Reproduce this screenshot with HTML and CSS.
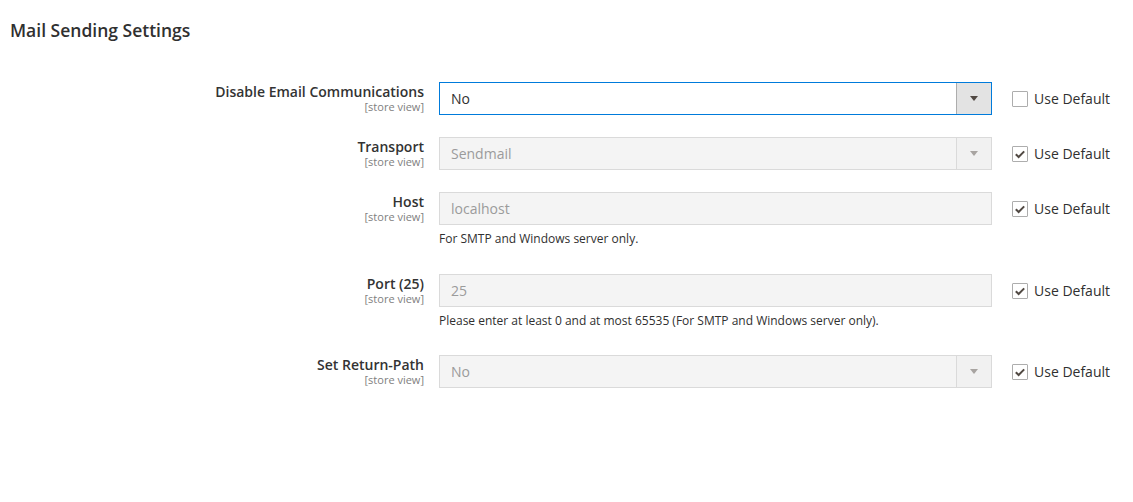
FILE: index.html
```html
<!DOCTYPE html>
<html>
<head>
<meta charset="utf-8">
<link rel="stylesheet" href="styles.css">
</head>
<body>
<div class="section">
  <h2 class="section-title">Mail Sending Settings</h2>
  <div class="form">
    <div class="row">
      <div class="label"><span class="label-text">Disable Email Communications</span><span class="scope">[store view]</span></div>
      <div class="control">
        <div class="select focus"><span class="value">No</span><span class="btn"><span class="arrow"></span></span></div>
      </div>
      <div class="default"><span class="check"></span><span>Use Default</span></div>
    </div>
    <div class="row">
      <div class="label"><span class="label-text">Transport</span><span class="scope">[store view]</span></div>
      <div class="control">
        <div class="select disabled"><span class="value">Sendmail</span><span class="btn"><span class="arrow"></span></span></div>
      </div>
      <div class="default"><span class="check checked"><svg viewBox="0 0 16 16" width="16" height="16"><path d="M3.8 8.2 L6.6 11 L12.2 5.4" fill="none" stroke="#514943" stroke-width="2"/></svg></span><span>Use Default</span></div>
    </div>
    <div class="row">
      <div class="label"><span class="label-text">Host</span><span class="scope">[store view]</span></div>
      <div class="control">
        <div class="input disabled"><span class="value">localhost</span></div>
        <div class="note">For SMTP and Windows server only.</div>
      </div>
      <div class="default"><span class="check checked"><svg viewBox="0 0 16 16" width="16" height="16"><path d="M3.8 8.2 L6.6 11 L12.2 5.4" fill="none" stroke="#514943" stroke-width="2"/></svg></span><span>Use Default</span></div>
    </div>
    <div class="row">
      <div class="label"><span class="label-text">Port (25)</span><span class="scope">[store view]</span></div>
      <div class="control">
        <div class="input disabled"><span class="value">25</span></div>
        <div class="note">Please enter at least 0 and at most 65535 (For SMTP and Windows server only).</div>
      </div>
      <div class="default"><span class="check checked"><svg viewBox="0 0 16 16" width="16" height="16"><path d="M3.8 8.2 L6.6 11 L12.2 5.4" fill="none" stroke="#514943" stroke-width="2"/></svg></span><span>Use Default</span></div>
    </div>
    <div class="row">
      <div class="label"><span class="label-text">Set Return-Path</span><span class="scope">[store view]</span></div>
      <div class="control">
        <div class="select disabled"><span class="value">No</span><span class="btn"><span class="arrow"></span></span></div>
      </div>
      <div class="default"><span class="check checked"><svg viewBox="0 0 16 16" width="16" height="16"><path d="M3.8 8.2 L6.6 11 L12.2 5.4" fill="none" stroke="#514943" stroke-width="2"/></svg></span><span>Use Default</span></div>
    </div>
  </div>
</div>
</body>
</html>
```
FILE: styles.css
```css
html, body {
  margin: 0;
  padding: 0;
  background: #ffffff;
  font-family: "Open Sans", "Liberation Sans", sans-serif;
  color: #303030;
}

.section {
  padding: 0 0 0 10px;
}

.section-title {
  margin: 0;
  padding-top: 18px;
  font-size: 17.5px;
  line-height: 24px;
  font-weight: 600;
  color: #303030;
}

.form {
  margin-top: 40px;
  display: flex;
  flex-direction: column;
  gap: 22px;
}

.row {
  display: grid;
  grid-template-columns: 414px 553px auto;
  column-gap: 15px;
  align-items: start;
}

.label {
  display: flex;
  flex-direction: column;
  align-items: flex-end;
  text-align: right;
  padding-top: 0;
}

.label-text {
  font-size: 14px;
  line-height: 19px;
  font-weight: 600;
  color: #333333;
}

.scope {
  font-size: 11px;
  line-height: 12px;
  color: #808080;
}

.control {
  display: flex;
  flex-direction: column;
}

.select, .input {
  box-sizing: border-box;
  height: 33px;
  border: 1px solid #adadad;
  display: flex;
  align-items: center;
  background: #ffffff;
}

.value {
  flex: 1;
  padding-left: 11px;
  font-size: 14px;
  line-height: 19px;
}

.select.focus {
  border-color: #007bdb;
}

.btn {
  width: 34px;
  align-self: stretch;
  border-left: 1px solid #adadad;
  background: #e3e3e3;
  display: flex;
  align-items: center;
  justify-content: center;
}

.arrow {
  width: 0;
  height: 0;
  border-left: 4px solid transparent;
  border-right: 4px solid transparent;
  border-top: 5px solid #514943;
}

.disabled {
  background: #f4f4f4;
  border-color: #dadada;
}

.disabled .value {
  color: #9b9b9b;
}

.disabled .btn {
  background: #f1f1f1;
  border-left-color: #dadada;
}

.disabled .arrow {
  border-top-color: #a8a4a1;
}

.note {
  margin-top: 6px;
  margin-bottom: 5px;
  font-size: 12px;
  line-height: 16px;
  color: #303030;
}

.row:nth-child(4) .note {
  margin-bottom: 4px;
}

.default {
  display: flex;
  align-items: center;
  gap: 6px;
  height: 33px;
  padding-left: 5px;
  font-size: 14px;
  color: #303030;
}

.check {
  box-sizing: border-box;
  width: 16px;
  height: 16px;
  border: 1px solid #adadad;
  border-radius: 1px;
  background: #ffffff;
  display: flex;
  align-items: center;
  justify-content: center;
}

.check svg {
  display: block;
  margin: -1px;
}
```
